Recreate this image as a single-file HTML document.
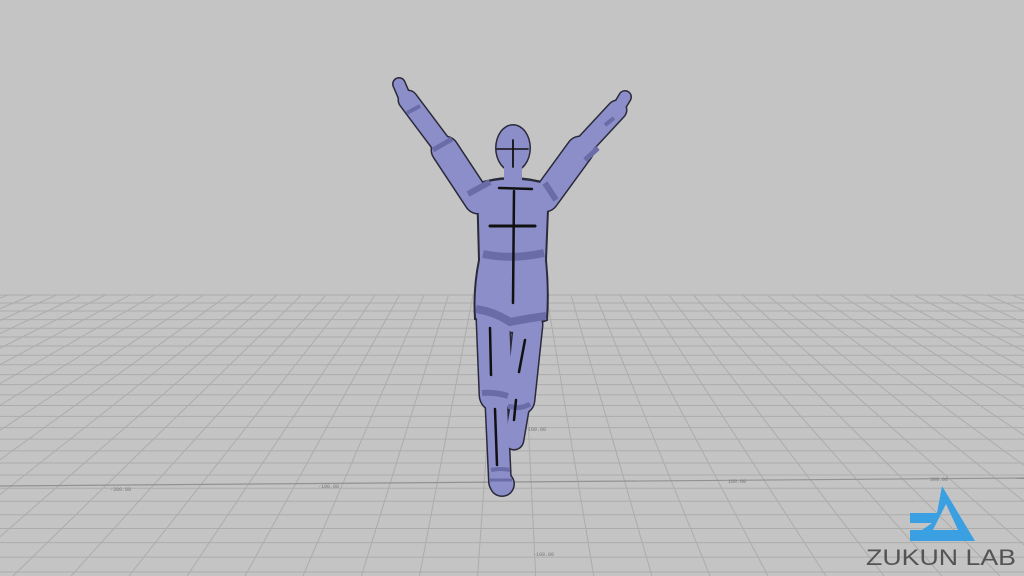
<!DOCTYPE html>
<html><head><meta charset="utf-8"><style>
html,body{margin:0;padding:0;background:#c4c4c4;}
svg{display:block}
</style></head><body>
<svg width="1024" height="576" viewBox="0 0 1024 576" xmlns="http://www.w3.org/2000/svg">
<rect width="1024" height="576" fill="#c4c4c4"/>
<g stroke="#acacac" stroke-width="1" fill="none">
<path d="M0 295H1024M0 303H1024M0 311H1024M0 319.6H1024M0 328.2H1024M0 337H1024M0 346H1024M0 355.3H1024M0 364.8H1024M0 374.6H1024M0 384.6H1024M0 394.9H1024M0 405.5H1024M0 416.4H1024M0 427.6H1024M0 439.1H1024M0 450.9H1024M0 463H1024M0 475H1024M0 488.2H1024M0 501.3H1024M0 514.7H1024M0 528.5H1024M0 542.6H1024M0 557.1H1024M0 572H1024"/>
<path d="M522 295L535.7 576M546.5 295L593.8 576M571 295L651.9 576M595.5 295L710 576M620 295L768 576M644.5 295L826 576M669 295L884 576M693.5 295L942 576M718 295L1000 576M742.5 295L1059 576M767 295L1117 576M791.5 295L1175 576M816 295L1233 576M840.5 295L1291 576M865 295L1349 576M889.5 295L1407 576M914 295L1465 576M938.5 295L1523 576M963 295L1581 576M987.5 295L1640 576M1012 295L1698 576
M497.5 295L477.6 576M473 295L419.5 576M448.5 295L361.4 576M424 295L303 576M399.5 295L245 576M375 295L187 576M350.5 295L129 576M326 295L71 576M301.5 295L13 576M277 295L-45 576M252.5 295L-103 576M228 295L-161 576M203.5 295L-219 576M179 295L-277 576M154.5 295L-336 576M130 295L-394 576M105.5 295L-452 576M81 295L-510 576M56.5 295L-568 576M32 295L-626 576M7.5 295L-684 576"/>
</g>
<path d="M0 486L1024 478" stroke="#929292" stroke-width="1.2"/>
<g font-family="Liberation Mono, monospace" font-size="5" fill="#777">
<text x="110" y="491">-300.00</text><text x="318" y="488">-100.00</text><text x="728" y="483">100.00</text><text x="930" y="481">300.00</text><text x="533" y="556">-100.00</text><text x="528" y="431">100.00</text>
</g>
<!-- figure outlines -->
<g stroke="#2a2a3a" fill="none" stroke-linecap="round">
<path d="M478 200L445 150" stroke-width="29"/><path d="M447 152L408 100" stroke-width="21"/><path d="M405 98L399 84" stroke-width="14"/>
<path d="M545 198L580 150" stroke-width="29"/><path d="M578 152L617 110" stroke-width="21"/><path d="M619 107L625 97" stroke-width="14"/>
<path d="M493 320L496 395" stroke-width="35"/><path d="M496 395L500 482" stroke-width="24"/>
<path d="M528 325L520 400" stroke-width="31"/><path d="M520 405L514 440" stroke-width="21"/>
</g>
<g fill="#2a2a3a">
<ellipse cx="513" cy="148" rx="18" ry="24"/>
<ellipse cx="502" cy="484" rx="13" ry="13"/>
<path d="M477 184Q510 172 549 184L546 260Q549 290 547 320L512 333L475 319Q473 290 479 260Z" stroke="#2a2a3a" stroke-width="2"/>
</g>
<!-- fills -->
<g stroke="#8c8ec9" fill="none" stroke-linecap="round">
<path d="M478 200L445 150" stroke-width="26"/><path d="M447 152L408 100" stroke-width="18"/><path d="M405 98L399 84" stroke-width="11"/>
<path d="M545 198L580 150" stroke-width="26"/><path d="M578 152L617 110" stroke-width="18"/><path d="M619 107L625 97" stroke-width="11"/>
<path d="M493 320L496 395" stroke-width="32"/><path d="M496 395L500 482" stroke-width="21"/>
<path d="M528 325L520 400" stroke-width="28"/><path d="M520 405L514 440" stroke-width="18"/>
</g>
<g fill="#8c8ec9">
<ellipse cx="513" cy="148" rx="16.5" ry="22.5"/>
<rect x="504" y="165" width="18" height="18"/>
<ellipse cx="502" cy="484" rx="11.5" ry="11.5"/>
<path d="M478 185Q510 174 548 185L545 260Q548 290 546 319L512 332L476 318Q474 290 480 260Z"/>
</g>
<!-- bands -->
<g stroke="#6a6ca8" fill="none">
<path d="M407 113L420 106" stroke-width="4"/><path d="M433 150L452 139" stroke-width="5"/><path d="M468 194L490 182" stroke-width="6"/>
<path d="M585 160L598 148" stroke-width="5"/><path d="M605 125L614 118" stroke-width="4"/><path d="M545 183L556 200" stroke-width="6"/>
<path d="M483 254Q512 260 544 253" stroke-width="8"/>
<path d="M476 309Q495 312 510 322Q530 318 546 316" stroke-width="8"/>
<path d="M482 393Q496 392 508 396" stroke-width="6"/><path d="M491 470Q501 468 510 470" stroke-width="4"/>
<path d="M508 406Q520 410 530 404" stroke-width="5"/><path d="M490 480L512 480" stroke-width="3"/>
</g>
<g stroke="#111" fill="none" stroke-width="2.5" stroke-linecap="round">
<path d="M497 149L528 149" stroke-width="1.6"/><path d="M513 140L513 167" stroke-width="1.8"/>
<path d="M499 188L532 189"/><path d="M514 191L513 303"/><path d="M490 226L535 226" stroke-width="3"/>
<path d="M490 328L491 375"/><path d="M525 340L519 372"/><path d="M495 409L497 465"/><path d="M516 400L514 420"/>
</g>
<!-- logo -->
<path fill="#3aa0e2" fill-rule="evenodd" d="M942 486L975 541L910 541L910 530L922 530L932 523L910 523L910 513L937 513Z M946 504L958 530L933 530Z"/>
<text x="866" y="565" font-family="Liberation Sans, sans-serif" font-size="22" fill="#545454" textLength="150" lengthAdjust="spacingAndGlyphs">ZUKUN LAB</text>
</svg>
</body></html>
